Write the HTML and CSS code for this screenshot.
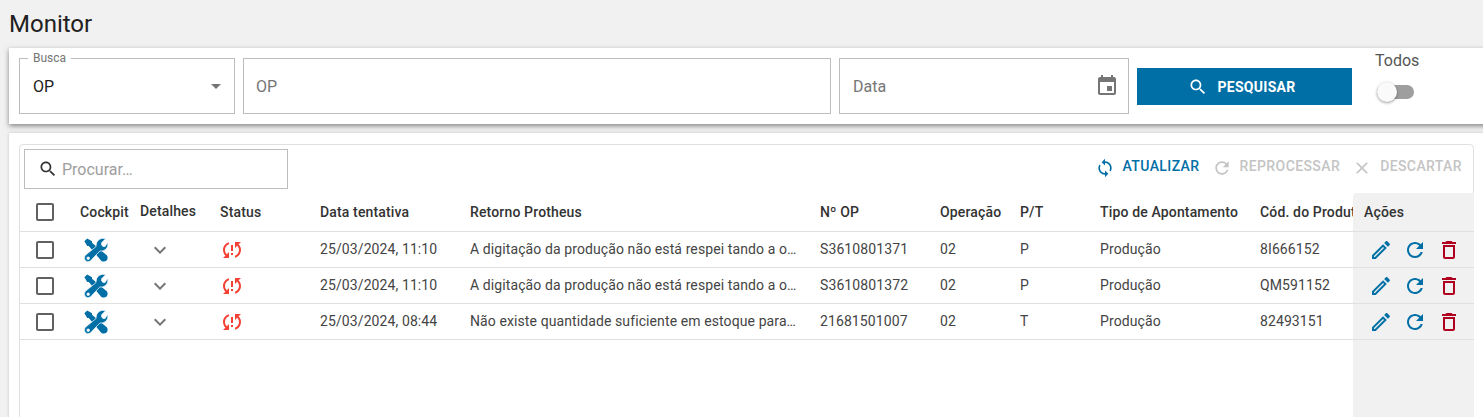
FILE: index.html
```html
<!DOCTYPE html>
<html lang="pt-BR">
<head>
    <meta charset="UTF-8">
    <title>Monitor</title>
    <link rel="stylesheet" href="styles.css">
</head>
<body>
    <svg class="defs" aria-hidden="true">
        <symbol id="i-search" viewBox="0 0 24 24"><path d="M15.5 14h-.79l-.28-.27C15.41 12.59 16 11.11 16 9.5 16 5.91 13.09 3 9.5 3S3 5.91 3 9.5 5.91 16 9.5 16c1.61 0 3.09-.59 4.23-1.57l.27.28v.79l5 4.99L20.49 19l-4.99-5zm-6 0C7.01 14 5 11.99 5 9.5S7.01 5 9.5 5 14 7.01 14 9.5 11.99 14 9.5 14z"/></symbol>
        <symbol id="i-event" viewBox="0 0 24 24"><path d="M17 12h-5v5h5v-5zM16 1v2H8V1H6v2H5c-1.11 0-1.99.9-1.99 2L3 19c0 1.1.89 2 2 2h14c1.1 0 2-.9 2-2V5c0-1.1-.9-2-2-2h-1V1h-2zm3 18H5V8h14v11z"/></symbol>
        <symbol id="i-sync" viewBox="0 0 24 24"><path d="M12 4V1L8 5l4 4V6c3.31 0 6 2.69 6 6 0 1.01-.25 1.97-.7 2.8l1.46 1.46C19.54 15.03 20 13.57 20 12c0-4.42-3.58-8-8-8zm0 14c-3.31 0-6-2.69-6-6 0-1.01.25-1.97.7-2.8L5.24 7.74C4.46 8.97 4 10.43 4 12c0 4.42 3.58 8 8 8v3l4-4-4-4v3z"/></symbol>
        <symbol id="i-refresh" viewBox="0 0 24 24"><path d="M17.65 6.35C16.2 4.9 14.21 4 12 4c-4.42 0-7.99 3.58-7.99 8s3.57 8 7.99 8c3.73 0 6.84-2.55 7.73-6h-2.08c-.82 2.33-3.04 4-5.65 4-3.31 0-6-2.69-6-6s2.69-6 6-6c1.66 0 3.14.69 4.22 1.78L13 11h7V4l-2.35 2.35z"/></symbol>
        <symbol id="i-close" viewBox="0 0 24 24"><path d="M19 6.41L17.59 5 12 10.59 6.41 5 5 6.41 10.59 12 5 17.59 6.41 19 12 13.41 17.59 19 19 17.59 13.41 12z"/></symbol>
        <symbol id="i-box" viewBox="0 0 24 24"><path d="M19 5v14H5V5h14m0-2H5c-1.1 0-2 .9-2 2v14c0 1.1.9 2 2 2h14c1.1 0 2-.9 2-2V5c0-1.1-.9-2-2-2z"/></symbol>
        <symbol id="i-more" viewBox="0 0 24 24"><path d="M16.59 8.59L12 13.17 7.41 8.59 6 10l6 6 6-6z"/></symbol>
        <symbol id="i-problem" viewBox="0 0 24 24"><path d="M3 12c0 2.21.91 4.2 2.36 5.64L3 20h6v-6l-2.24 2.24C5.68 15.15 5 13.66 5 12c0-2.61 1.67-4.83 4-5.65V4.26C5.55 5.15 3 8.27 3 12zm8 5h2v-2h-2v2zM21 4h-6v6l2.24-2.24C18.32 8.85 19 10.34 19 12c0 2.61-1.67 4.83-4 5.65v2.09c3.45-.89 6-4.01 6-7.74 0-2.21-.91-4.2-2.36-5.64L21 4zm-10 9h2V7h-2v6z"/></symbol>
        <symbol id="i-edit" viewBox="0 0 24 24"><path d="M3 17.25V21h3.75L17.81 9.94l-3.75-3.75L3 17.25zM5.92 19H5v-.92l9.06-9.06.92.92L5.92 19zM20.71 5.63l-2.34-2.34c-.2-.2-.45-.29-.71-.29s-.51.1-.7.29l-1.83 1.83 3.75 3.75 1.83-1.83c.39-.39.39-1.02 0-1.41z"/></symbol>
        <symbol id="i-delete" viewBox="0 0 24 24"><path d="M6 19c0 1.1.9 2 2 2h8c1.1 0 2-.9 2-2V7H6v12zM8 9h8v10H8V9zm7.5-5l-1-1h-5l-1 1H5v2h14V4z"/></symbol>
        <symbol id="i-tools" viewBox="0 0 24 24">
            <path d="M0.4 3.2L3.2 0.4L8 3.2V4.8L23 17.4Q24.4 20.4 22.6 22.6Q20.4 24.4 17.4 23L4.8 8H3.2Z"/>
            <path d="M12 8.6Q11.6 4.4 14.6 1.8Q17.6-.6 21.8.6L17.6 4.8V7L19 8.4H21.2L23.5 4.2Q24.8 8.4 22.2 11Q19 13.8 15.8 13L6.4 23Q3.8 24.6 1.4 22.8Q-.4 20.4 1 17.6ZM2.9 20.2A1.3 1.3 0 1 0 5.5 20.2A1.3 1.3 0 1 0 2.9 20.2Z" fill-rule="evenodd" stroke="#fff" stroke-width=".7"/>
        </symbol>
    </svg>

    <h1 class="page-title">Monitor</h1>

    <!-- filtros -->
    <section class="filter-card">
        <div class="field field-select">
            <span class="field-label">Busca</span>
            <span class="field-value">OP</span>
            <span class="select-arrow"></span>
        </div>
        <div class="field field-op"><span class="field-hint">OP</span></div>
        <div class="field field-date">
            <span class="field-hint">Data</span>
            <svg class="icon icon-grey"><use href="#i-event"/></svg>
        </div>
        <button class="search-btn" type="button">
            <svg class="icon-sm"><use href="#i-search"/></svg>
            PESQUISAR
        </button>
        <div class="toggle-box">
            <span class="toggle-label">Todos</span>
            <span class="toggle"><span class="toggle-thumb"></span></span>
        </div>
    </section>

    <!-- tabela -->
    <section class="table-card">
        <div class="table-inner">
            <div class="toolbar">
                <div class="search-box">
                    <svg class="icon-sm icon-dark"><use href="#i-search"/></svg>
                    <span>Procurar…</span>
                </div>
                <div class="toolbar-actions">
                    <span class="tool tool-on"><svg class="icon-sm"><use href="#i-sync"/></svg>ATUALIZAR</span>
                    <span class="tool"><svg class="icon-sm"><use href="#i-refresh"/></svg>REPROCESSAR</span>
                    <span class="tool"><svg class="icon-sm"><use href="#i-close"/></svg>DESCARTAR</span>
                </div>
            </div>

            <table class="grid">
                <colgroup>
                    <col class="c-check"><col class="c-cockpit"><col class="c-det"><col class="c-status">
                    <col class="c-data"><col class="c-ret"><col class="c-op"><col class="c-oper">
                    <col class="c-pt"><col class="c-tipo"><col class="c-cod"><col class="c-acoes">
                </colgroup>
                <thead>
                    <tr>
                        <th class="cell-check"><svg class="icon icon-box"><use href="#i-box"/></svg></th>
                        <th>Cockpit</th>
                        <th class="th-raised">Detalhes</th>
                        <th>Status</th>
                        <th>Data tentativa</th>
                        <th>Retorno Protheus</th>
                        <th>Nº OP</th>
                        <th>Operação</th>
                        <th>P/T</th>
                        <th>Tipo de Apontamento</th>
                        <th>Cód. do Produto</th>
                        <th class="cell-acoes th-acoes">Ações</th>
                    </tr>
                </thead>
                <tbody>
                    <tr>
                        <td class="cell-check"><svg class="icon icon-box"><use href="#i-box"/></svg></td>
                        <td class="cell-tools"><svg class="icon icon-blue"><use href="#i-tools"/></svg></td>
                        <td class="cell-more"><svg class="icon icon-grey"><use href="#i-more"/></svg></td>
                        <td class="cell-status"><svg class="icon icon-red"><use href="#i-problem"/></svg></td>
                        <td>25/03/2024, 11:10</td>
                        <td class="cell-ret"><div class="ellipsis">A digitação da produção não está respei tando a o…</div></td>
                        <td>S3610801371</td>
                        <td>02</td>
                        <td>P</td>
                        <td>Produção</td>
                        <td>8I666152</td>
                        <td class="cell-acoes">
                            <div class="row-actions">
                                <svg class="icon icon-blue"><use href="#i-edit"/></svg>
                                <svg class="icon icon-blue"><use href="#i-refresh"/></svg>
                                <svg class="icon icon-wine"><use href="#i-delete"/></svg>
                            </div>
                        </td>
                    </tr>
                    <tr>
                        <td class="cell-check"><svg class="icon icon-box"><use href="#i-box"/></svg></td>
                        <td class="cell-tools"><svg class="icon icon-blue"><use href="#i-tools"/></svg></td>
                        <td class="cell-more"><svg class="icon icon-grey"><use href="#i-more"/></svg></td>
                        <td class="cell-status"><svg class="icon icon-red"><use href="#i-problem"/></svg></td>
                        <td>25/03/2024, 11:10</td>
                        <td class="cell-ret"><div class="ellipsis">A digitação da produção não está respei tando a o…</div></td>
                        <td>S3610801372</td>
                        <td>02</td>
                        <td>P</td>
                        <td>Produção</td>
                        <td>QM591152</td>
                        <td class="cell-acoes">
                            <div class="row-actions">
                                <svg class="icon icon-blue"><use href="#i-edit"/></svg>
                                <svg class="icon icon-blue"><use href="#i-refresh"/></svg>
                                <svg class="icon icon-wine"><use href="#i-delete"/></svg>
                            </div>
                        </td>
                    </tr>
                    <tr>
                        <td class="cell-check"><svg class="icon icon-box"><use href="#i-box"/></svg></td>
                        <td class="cell-tools"><svg class="icon icon-blue"><use href="#i-tools"/></svg></td>
                        <td class="cell-more"><svg class="icon icon-grey"><use href="#i-more"/></svg></td>
                        <td class="cell-status"><svg class="icon icon-red"><use href="#i-problem"/></svg></td>
                        <td>25/03/2024, 08:44</td>
                        <td class="cell-ret"><div class="ellipsis">Não existe quantidade suficiente em estoque para…</div></td>
                        <td>21681501007</td>
                        <td>02</td>
                        <td>T</td>
                        <td>Produção</td>
                        <td>82493151</td>
                        <td class="cell-acoes">
                            <div class="row-actions">
                                <svg class="icon icon-blue"><use href="#i-edit"/></svg>
                                <svg class="icon icon-blue"><use href="#i-refresh"/></svg>
                                <svg class="icon icon-wine"><use href="#i-delete"/></svg>
                            </div>
                        </td>
                    </tr>
                    <tr class="row-empty">
                        <td colspan="11"></td>
                        <td class="cell-acoes"></td>
                    </tr>
                </tbody>
            </table>
        </div>
    </section>
</body>
</html>
```

FILE: styles.css
```css
* {
    margin: 0;
    padding: 0;
    box-sizing: border-box;
}

html, body {
    height: 417px;
    overflow: hidden;
}

body {
    font-family: Roboto, Arial, sans-serif;
    background-color: #f1f1f1;
    color: #444;
    padding-left: 9px;
}

.defs {
    display: none;
}

/* icons */
.icon {
    width: 24px;
    height: 24px;
    display: block;
    fill: currentColor;
    flex-shrink: 0;
}

.icon-sm {
    width: 20px;
    height: 20px;
    display: block;
    fill: currentColor;
    flex-shrink: 0;
}

.icon-grey { color: #757575; }
.icon-dark { color: #333; }
.icon-box { color: #616161; }
.icon-blue { color: #006fa6; }
.icon-red { color: #f44336; }
.icon-wine { color: #b00020; }

/* title */
.page-title {
    height: 48px;
    line-height: 48px;
    font-size: 24px;
    font-weight: 400;
    color: #212121;
}

/* filter card */
.filter-card {
    display: flex;
    align-items: flex-start;
    gap: 8px;
    width: 1500px;
    height: 76px;
    padding: 10px 0 0 10px;
    background-color: #fff;
    box-shadow: 0 2px 5px rgba(0, 0, 0, 0.45);
}

.field {
    position: relative;
    display: flex;
    align-items: center;
    justify-content: space-between;
    height: 56px;
    padding: 0 13px;
    border: 1px solid #bdbdbd;
    font-size: 16px;
}

.field-select { width: 216px; }
.field-op { width: 588px; padding-left: 12px; }
.field-date { width: 290px; padding-right: 9px; }

.field-label {
    position: absolute;
    top: -8px;
    left: 8px;
    padding: 0 5px;
    background-color: #fff;
    font-size: 12px;
    line-height: 14px;
    color: #757575;
}

.field-value {
    color: #212121;
}

.field-hint {
    color: #757575;
}

.select-arrow {
    width: 0;
    height: 0;
    border-left: 5px solid transparent;
    border-right: 5px solid transparent;
    border-top: 5px solid #757575;
}

.search-btn {
    display: flex;
    align-items: center;
    justify-content: center;
    gap: 9px;
    width: 215px;
    height: 37px;
    margin-top: 10px;
    padding-right: 5px;
    border: none;
    background-color: #006fa6;
    color: #fff;
    font-family: inherit;
    font-size: 14px;
    font-weight: 700;
    letter-spacing: 0.3px;
}

.toggle-box {
    margin: -9px 0 0 15px;
}

.toggle-label {
    display: block;
    font-size: 16px;
    line-height: 24px;
    color: #555;
}

.toggle {
    position: relative;
    display: block;
    width: 37px;
    height: 14px;
    margin: 12px 0 0 2px;
    border-radius: 7px;
    background-color: #9e9e9e;
}

.toggle-thumb {
    position: absolute;
    top: -3px;
    left: 0;
    width: 20px;
    height: 20px;
    border-radius: 50%;
    background-color: #fafafa;
    box-shadow: 0 1px 3px rgba(0, 0, 0, 0.4);
}

/* table card */
.table-card {
    width: 1500px;
    height: 300px;
    margin-top: 9px;
    padding: 11px 0 0 10px;
    background-color: #fff;
    box-shadow: 0 0 3px rgba(0, 0, 0, 0.2);
}

.table-inner {
    width: 1455px;
    height: 290px;
    border: 1px solid #e0e0e0;
    border-radius: 4px;
}

.toolbar {
    display: flex;
    justify-content: space-between;
    height: 48px;
    padding: 4px 11px 0 4px;
}

.search-box {
    display: flex;
    align-items: center;
    gap: 4px;
    width: 264px;
    height: 40px;
    padding-left: 13px;
    border: 1px solid #bdbdbd;
    font-size: 16px;
    color: #9e9e9e;
}

.toolbar-actions {
    display: flex;
    gap: 12px;
    height: 34px;
}

.tool {
    display: flex;
    align-items: center;
    gap: 8px;
    font-size: 14px;
    font-weight: 500;
    letter-spacing: 0.4px;
    color: #c4c4c4;
}

.tool .icon-sm {
    margin-top: 4px;
}

.tool-on {
    color: #006fa6;
}

/* table */
.grid {
    width: 1454px;
    table-layout: fixed;
    border-collapse: separate;
    border-spacing: 0;
    font-size: 14px;
    letter-spacing: 0.1px;
}

.c-check { width: 60px; }
.c-cockpit { width: 60px; }
.c-det { width: 80px; }
.c-status { width: 100px; }
.c-data { width: 150px; }
.c-ret { width: 350px; }
.c-op { width: 120px; }
.c-oper { width: 80px; }
.c-pt { width: 80px; }
.c-tipo { width: 160px; }
.c-cod { width: 93px; }
.c-acoes { width: 121px; }

.grid th {
    height: 39px;
    text-align: left;
    font-weight: 500;
    letter-spacing: 0.15px;
    color: #333;
    white-space: nowrap;
    overflow: hidden;
    border-bottom: 1px solid #e0e0e0;
}

.grid td {
    height: 36px;
    padding-bottom: 1px;
    white-space: nowrap;
    overflow: hidden;
    border-bottom: 1px solid #e0e0e0;
}

.grid .th-raised {
    padding-bottom: 3px;
}

.grid td .icon {
    margin-top: 2px;
}

.cell-check .icon {
    margin-left: 13px;
}

.cell-tools .icon {
    margin-left: 4px;
}

.cell-more .icon {
    margin-left: 8px;
}

.ellipsis {
    overflow: hidden;
}

.grid .cell-acoes {
    padding-left: 11px;
    background-color: #f1f1f1;
}

.grid .th-acoes {
    border-radius: 4px 0 0 0;
}

.row-actions {
    display: flex;
    gap: 10px;
    padding-left: 5px;
}

.grid .row-empty td {
    height: 90px;
    border-bottom: none;
}
```
